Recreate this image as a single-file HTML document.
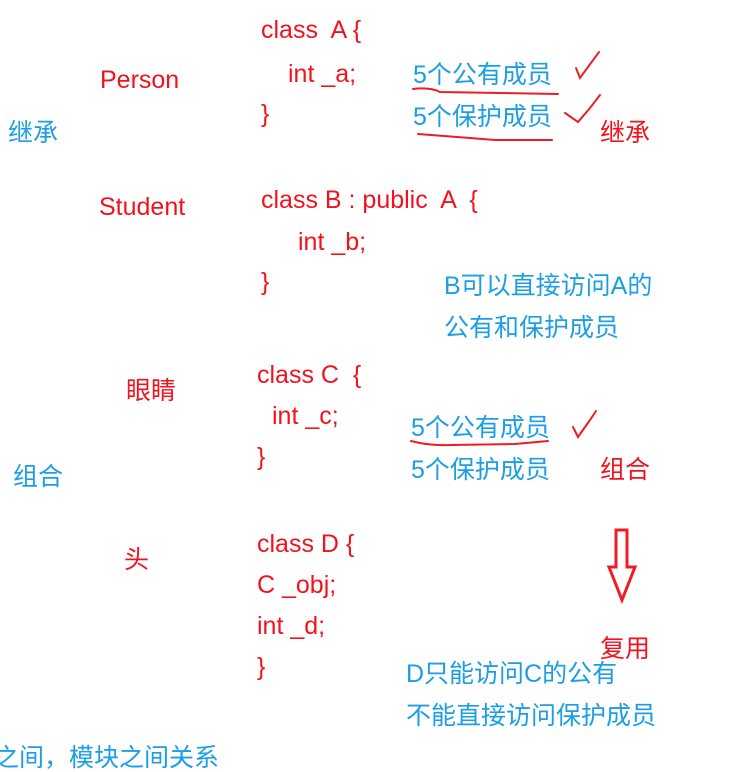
<!DOCTYPE html>
<html><head><meta charset="utf-8"><style>
body{margin:0;width:732px;height:752px;background:#fff;position:relative;overflow:hidden;font-family:"Liberation Sans","Noto Sans CJK SC",sans-serif;}
.t{position:absolute;line-height:1;white-space:pre;}
.r{color:#f2121e;font-size:25px;}
.b{color:#1c9ee6;font-size:25px;}
.z{font-size:25px;}
</style></head><body>
<div class="t r" style="left:261px;top:18px">class  A {</div>
<div class="t r" style="left:288px;top:62px">int _a;</div>
<div class="t r" style="left:261px;top:102px">}</div>
<div class="t r" style="left:100px;top:68px">Person</div>
<div class="t b z" style="left:8px;top:121px">继承</div>
<div class="t r" style="left:99px;top:195px">Student</div>
<div class="t r" style="left:261px;top:188px">class B : public  A  {</div>
<div class="t r" style="left:298px;top:230px">int _b;</div>
<div class="t r" style="left:261px;top:270px">}</div>
<div class="t b" style="left:413px;top:63px">5个公有成员</div>
<div class="t b" style="left:413px;top:105px">5个保护成员</div>
<div class="t r z" style="left:600px;top:121px">继承</div>
<div class="t b" style="left:444px;top:274px">B可以直接访问A的</div>
<div class="t b" style="left:444px;top:316px">公有和保护成员</div>
<div class="t r z" style="left:126px;top:379px">眼睛</div>
<div class="t r" style="left:257px;top:363px">class C  {</div>
<div class="t r" style="left:272px;top:404px">int _c;</div>
<div class="t r" style="left:257px;top:445px">}</div>
<div class="t b z" style="left:13px;top:465px">组合</div>
<div class="t b" style="left:411px;top:416px">5个公有成员</div>
<div class="t b" style="left:411px;top:458px">5个保护成员</div>
<div class="t r z" style="left:600px;top:458px">组合</div>
<div class="t r z" style="left:124px;top:548px">头</div>
<div class="t r" style="left:257px;top:532px">class D {</div>
<div class="t r" style="left:257px;top:573px">C _obj;</div>
<div class="t r" style="left:257px;top:614px">int _d;</div>
<div class="t r" style="left:257px;top:655px">}</div>
<div class="t r z" style="left:600px;top:637px">复用</div>
<div class="t b" style="left:406px;top:662px">D只能访问C的公有</div>
<div class="t b" style="left:406px;top:704px">不能直接访问保护成员</div>
<div class="t b z" style="left:-6px;top:746px">之间，模块之间关系</div>
<svg width="732" height="752" style="position:absolute;left:0;top:0" fill="none" stroke="#ee1c24" stroke-width="2" stroke-linecap="round">
<path d="M413 89 Q430 87 440 92 L500 93 L558 94"/>
<path d="M418 134 L470 138 L495 140 L552 140"/>
<path d="M576 68 L580 78 L599 52"/>
<path d="M565 113 L578 122 L590 108 L600 95"/>
<path d="M411 441 Q430 446 450 445 L515 444 L548 441"/>
<path d="M573 427 L578 437 L590 420 L596 411"/>
<path d="M616 530 L627 530 L627 567 L635 567 L622 600 L609 567 L616 567 Z" stroke-width="3"/>
</svg>
</body></html>
